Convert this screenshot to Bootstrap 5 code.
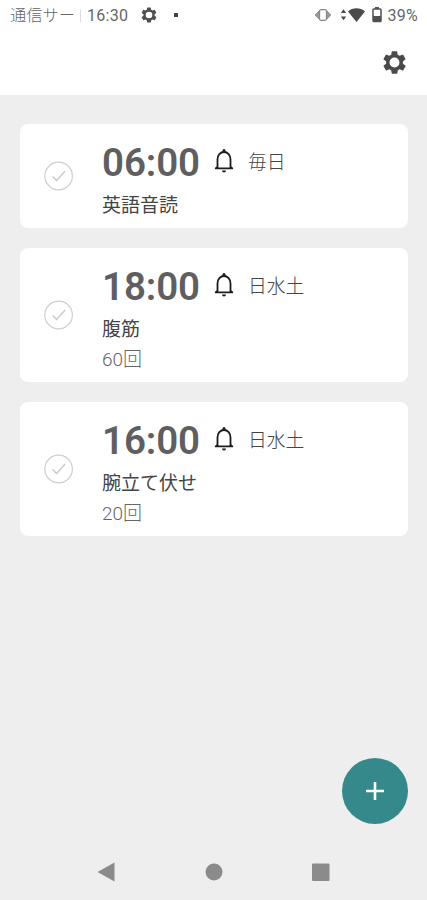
<!DOCTYPE html>
<html lang="ja">
<head>
<meta charset="utf-8">
<meta name="viewport" content="width=device-width, initial-scale=1">
<title>習慣リスト</title>
<link href="https://cdn.jsdelivr.net/npm/bootstrap@5.3.0/dist/css/bootstrap.min.css" rel="stylesheet">
<style>
  body { font-family: Roboto, "Noto Sans CJK JP", sans-serif; background: #eee; color: #555; }
  .screen { height: 900px; overflow: hidden; }
  svg { display: block; flex: none; }
  .statusbar { height: 31px; font-size: 16px; line-height: 31px; padding: 0 9px 0 10px; color: #666; letter-spacing: .3px; }
  .carrier { width: 66px; white-space: nowrap; font-weight: 300; font-size: 16.300px; letter-spacing: 0; }
  .divider { width: 1px; height: 12px; background: #ddd; margin: 0 6px 0 4px; }
  .gear-small { margin-left: 12px; margin-bottom: 1px; }
  .dot { width: 4px; height: 4px; background: #444; margin-left: 16px; margin-bottom: 1px; }
  .vibrate, .wifi, .battery { margin-bottom: 2px; }
  .wifi { margin-left: 8px; }
  .battery { margin-left: 6px; }
  .percent { margin-left: 5px; }
  .appbar { height: 64px; padding: 0 19px 2px 0; }
  .tasks { padding: 29px 19px 0 20px; gap: 20px; }
  .task { border-radius: 8px; min-height: 104px; }
  .task.tall { min-height: 134px; }
  .check { margin-left: 24px; margin-right: 28px; }
  .body-col { padding-top: 18px; }
  .time-row { height: 42px; }
  .time { font-size: 38.500px; line-height: 42px; font-weight: 600; color: #5f5f61; width: 112px; letter-spacing: -.1px; }
  .bell { margin-bottom: 4px; }
  .days { font-size: 18.800px; line-height: 42px; font-weight: 300; margin-left: 14px; color: #444; }
  .title { font-size: 19px; line-height: 30px; height: 30px; margin-top: 7px; color: #444; }
  .note { font-size: 19px; line-height: 30px; height: 30px; font-weight: 300; color: #666; }
  .fab { width: 66px; height: 66px; background: #35898a; border: 0; margin-right: 19px; }
  .sysnav { height: 56px; margin-top: 20px; padding-left: 97px; }
</style>
</head>
<body>
<div class="screen d-flex flex-column">
  <svg class="position-absolute" width="0" height="0">
    <symbol id="gear" viewBox="0 0 24 24"><path fill-rule="evenodd" d="M19.400 13c.1-.3.1-.7.1-1s0-.7-.1-1l2.200-1.700a.5.5 0 0 0 .1-.6l-2-3.500a.5.5 0 0 0-.6-.2l-2.600 1c-.5-.4-1.100-.7-1.700-1l-.4-2.600A.5.5 0 0 0 14 2h-4a.5.5 0 0 0-.5.4L9.100 5c-.6.3-1.200.6-1.700 1l-2.500-1a.5.5 0 0 0-.6.2l-2 3.500a.5.5 0 0 0 .1.6L4.600 11a8 8 0 0 0 0 2l-2.200 1.700a.5.5 0 0 0-.1.6l2 3.500c.1.2.4.3.6.2l2.500-1c.5.4 1.100.7 1.700 1l.4 2.600c0 .2.2.4.5.4h4c.2 0 .5-.2.5-.4l.4-2.600c.6-.3 1.200-.6 1.700-1l2.600 1c.2.1.5 0 .6-.2l2-3.500a.5.5 0 0 0-.1-.6zM12 16.400a4.400 4.400 0 1 1 0-8.800 4.400 4.400 0 0 1 0 8.800z"/></symbol>
    <symbol id="ring" viewBox="0 0 30 30"><circle cx="14.600" cy="15" r="13.800" fill="none" stroke="#cfcfcf" stroke-width="1.200"/><path d="m8.600 15.500 4 4 8.500-9.500" fill="none" stroke="#c8c8c8" stroke-width="1.300"/></symbol>
    <symbol id="bell" viewBox="0 0 20 26"><path d="M1 20.300h18M3.500 20V11.500C3.500 7 6.300 4 10 4s6.500 3 6.500 7.500V20" fill="none" stroke="#1c1c1c" stroke-width="1.800"/><path d="M8.500 4V2.500a1.500 1.500 0 0 1 3 0V4zM8 22.500h4a2 2 0 0 1-4 0zM.5 20.800 4 17v3.800zM19.500 20.800 16 17v3.800z" fill="#1c1c1c"/></symbol>
  </svg>
  <header class="bg-white">
    <div class="statusbar d-flex align-items-center">
      <span class="carrier">通信サー</span>
      <span class="divider"></span>
      <span>16:30</span>
      <svg class="gear-small" width="18" height="18" fill="#505050"><use href="#gear"/></svg>
      <span class="dot"></span>
      <div class="d-flex align-items-center ms-auto">
        <svg class="vibrate" width="18" height="14" viewBox="0 0 18 14"><path d="M5 3 1 7l4 4zM13 3l4 4-4 4z" fill="#999" stroke="#999"/><rect x="5.500" y="1.700" width="7" height="10.600" rx="1.500" fill="#fff" stroke="#888" stroke-width="1.300"/></svg>
        <svg class="wifi" width="26" height="16" viewBox="0 0 26 16" fill="#4c4c4c"><path d="M3.500 2.200 6.200 6H.8zM3.500 13.200.8 9.400h5.400zM8 4.500C12.500.200 20.500.200 25 4.500L16.500 15z"/></svg>
        <svg class="battery" width="10" height="16" viewBox="0 0 10 16"><path d="M3 0h4v2H3z" fill="#555"/><rect x="1" y="2" width="8" height="12.500" rx=".8" fill="#fff" stroke="#505050" stroke-width="1.500"/><path d="M1 9h8v5H1z" fill="#505050"/></svg>
        <span class="percent">39%</span>
      </div>
    </div>
    <div class="appbar d-flex align-items-center justify-content-end">
      <svg width="27" height="27" fill="#4a4a4c"><use href="#gear"/></svg>
    </div>
  </header>

  <main class="tasks d-flex flex-column">
    <section class="task bg-white d-flex align-items-center">
      <svg class="check" width="30" height="30"><use href="#ring"/></svg>
      <div class="body-col align-self-start">
        <div class="time-row d-flex align-items-center"><span class="time">06:00</span><svg class="bell" width="20" height="26"><use href="#bell"/></svg><span class="days">毎日</span></div>
        <div class="title">英語音読</div>
      </div>
    </section>
    <section class="task tall bg-white d-flex align-items-center">
      <svg class="check" width="30" height="30"><use href="#ring"/></svg>
      <div class="body-col align-self-start">
        <div class="time-row d-flex align-items-center"><span class="time">18:00</span><svg class="bell" width="20" height="26"><use href="#bell"/></svg><span class="days">日水土</span></div>
        <div class="title">腹筋</div>
        <div class="note">60回</div>
      </div>
    </section>
    <section class="task tall bg-white d-flex align-items-center">
      <svg class="check" width="30" height="30"><use href="#ring"/></svg>
      <div class="body-col align-self-start">
        <div class="time-row d-flex align-items-center"><span class="time">16:00</span><svg class="bell" width="20" height="26"><use href="#bell"/></svg><span class="days">日水土</span></div>
        <div class="title">腕立て伏せ</div>
        <div class="note">20回</div>
      </div>
    </section>
  </main>

  <button class="fab rounded-circle d-flex align-items-center justify-content-center p-0 ms-auto mt-auto" aria-label="追加">
    <svg width="18" height="18" viewBox="0 0 18 18"><path d="M9 0v18M0 9h18" stroke="#fff" stroke-width="2.600"/></svg>
  </button>
  <nav class="sysnav d-flex align-items-center">
    <svg width="236" height="20" viewBox="0 0 236 20" fill="#8b8b8b"><path d="M.5 10 17.500.500v19z"/><circle cx="117" cy="10" r="8.500"/><rect x="215" y="1.500" width="17.500" height="17.500" rx="1"/></svg>
  </nav>
</div>
<script src="https://cdn.jsdelivr.net/npm/bootstrap@5.3.0/dist/js/bootstrap.bundle.min.js"></script>
</body>
</html>
